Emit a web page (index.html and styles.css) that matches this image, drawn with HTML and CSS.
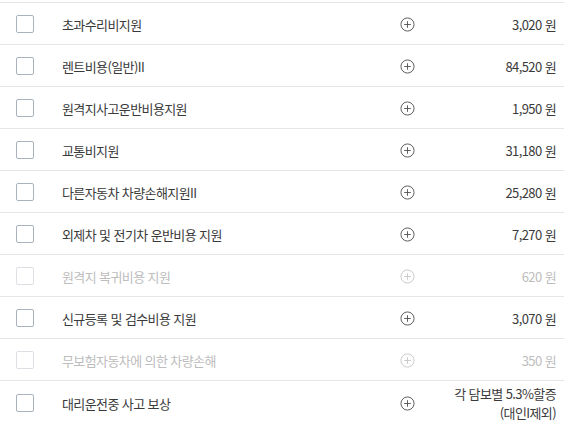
FILE: index.html
```html
<!DOCTYPE html>
<html lang="ko">
<head>
<meta charset="utf-8">
<link rel="stylesheet" href="styles.css">
</head>
<body>
<div class="list">
  <div class="row"><span class="box"></span><span class="label">초과수리비지원</span><span class="plus"><svg viewBox="0 0 16 16"><circle cx="8" cy="8" r="7"/><path d="M8 4.5v7M4.5 8h7"/></svg></span><span class="amount">3,020 원</span></div>
  <div class="row"><span class="box"></span><span class="label">렌트비용(일반)II</span><span class="plus"><svg viewBox="0 0 16 16"><circle cx="8" cy="8" r="7"/><path d="M8 4.5v7M4.5 8h7"/></svg></span><span class="amount">84,520 원</span></div>
  <div class="row"><span class="box"></span><span class="label">원격지사고운반비용지원</span><span class="plus"><svg viewBox="0 0 16 16"><circle cx="8" cy="8" r="7"/><path d="M8 4.5v7M4.5 8h7"/></svg></span><span class="amount">1,950 원</span></div>
  <div class="row"><span class="box"></span><span class="label">교통비지원</span><span class="plus"><svg viewBox="0 0 16 16"><circle cx="8" cy="8" r="7"/><path d="M8 4.5v7M4.5 8h7"/></svg></span><span class="amount">31,180 원</span></div>
  <div class="row"><span class="box"></span><span class="label">다른자동차 차량손해지원II</span><span class="plus"><svg viewBox="0 0 16 16"><circle cx="8" cy="8" r="7"/><path d="M8 4.5v7M4.5 8h7"/></svg></span><span class="amount">25,280 원</span></div>
  <div class="row"><span class="box"></span><span class="label">외제차 및 전기차 운반비용 지원</span><span class="plus"><svg viewBox="0 0 16 16"><circle cx="8" cy="8" r="7"/><path d="M8 4.5v7M4.5 8h7"/></svg></span><span class="amount">7,270 원</span></div>
  <div class="row disabled"><span class="box"></span><span class="label">원격지 복귀비용 지원</span><span class="plus"><svg viewBox="0 0 16 16"><circle cx="8" cy="8" r="7"/><path d="M8 4.5v7M4.5 8h7"/></svg></span><span class="amount">620 원</span></div>
  <div class="row"><span class="box"></span><span class="label">신규등록 및 검수비용 지원</span><span class="plus"><svg viewBox="0 0 16 16"><circle cx="8" cy="8" r="7"/><path d="M8 4.5v7M4.5 8h7"/></svg></span><span class="amount">3,070 원</span></div>
  <div class="row disabled"><span class="box"></span><span class="label">무보험자동차에 의한 차량손해</span><span class="plus"><svg viewBox="0 0 16 16"><circle cx="8" cy="8" r="7"/><path d="M8 4.5v7M4.5 8h7"/></svg></span><span class="amount">350 원</span></div>
  <div class="row tall"><span class="box"></span><span class="label">대리운전중 사고 보상</span><span class="plus"><svg viewBox="0 0 16 16"><circle cx="8" cy="8" r="7"/><path d="M8 4.5v7M4.5 8h7"/></svg></span><span class="amount two"><span class="ln">각 담보별 5.3%할증</span><span class="ln">(대인I제외)</span></span></div>
</div>
</body>
</html>
```

FILE: styles.css
```css
* { box-sizing: border-box; }
html, body { margin: 0; padding: 0; background: #fff; }
body {
  font-family: "Noto Sans CJK KR", "Noto Sans", sans-serif;
  font-size: 13px;
  letter-spacing: -0.6px;
  color: #3a3a3a;
}
.list { padding-top: 2px; }
.row {
  display: flex;
  align-items: center;
  height: 42px;
  border-top: 1px solid #e6e6e6;
  padding: 1px 8px 0 16px;
}
.row.tall { height: 44px; padding-top: 1px; }
.box {
  width: 18px;
  height: 18px;
  border: 1px solid #a9b3bd;
  border-radius: 2px;
  flex: none;
  margin-right: 28px;
}
.label { flex: 1; }
.plus { width: 15px; height: 15px; flex: none; display: flex; }
.plus svg { width: 15px; height: 15px; }
.plus circle, .plus path { fill: none; stroke: #555; stroke-width: 1; }
.amount {
  width: 141px;
  flex: none;
  text-align: right;
}
.amount.two { display: flex; flex-direction: column; align-items: flex-end; }
.ln { display: block; line-height: 19px; }
.disabled .label, .disabled .amount { color: #bdbdbd; }
.disabled .box { border-color: #dcdfe3; }
.disabled .plus circle, .disabled .plus path { stroke: #c8c8c8; }
```
